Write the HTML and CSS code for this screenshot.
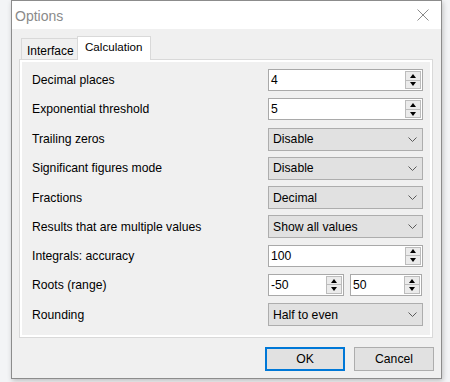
FILE: index.html
```html
<!DOCTYPE html>
<html>
<head>
<meta charset="utf-8">
<link rel="stylesheet" href="styles.css">
</head>
<body>
<div class="dialog">
  <div class="titlebar">
    <span class="title">Options</span>
    <svg class="close" width="12" height="12" viewBox="0 0 12 12"><path d="M0.5 0.5L11.5 11.5M11.5 0.5L0.5 11.5" stroke="#8a8a8a" stroke-width="1" fill="none"/></svg>
  </div>
  <div class="client">
    <div class="tabs">
      <div class="tab">Interface</div>
      <div class="tab active">Calculation</div>
    </div>
    <div class="panel">
      <div class="page">
        <div class="row"><span class="label">Decimal places</span>
          <div class="spin"><span class="val">4</span><div class="spinner"><div class="sb"><i class="up"></i></div><div class="sb"><i class="down"></i></div></div></div></div>
        <div class="row"><span class="label">Exponential threshold</span>
          <div class="spin"><span class="val">5</span><div class="spinner"><div class="sb"><i class="up"></i></div><div class="sb"><i class="down"></i></div></div></div></div>
        <div class="row"><span class="label">Trailing zeros</span>
          <div class="combo"><span class="val">Disable</span><svg class="chev" width="9" height="5" viewBox="0 0 9 5"><path d="M0.5 0.5L4.5 4.5L8.5 0.5" stroke="#5a5a5a" fill="none"/></svg></div></div>
        <div class="row"><span class="label">Significant figures mode</span>
          <div class="combo"><span class="val">Disable</span><svg class="chev" width="9" height="5" viewBox="0 0 9 5"><path d="M0.5 0.5L4.5 4.5L8.5 0.5" stroke="#5a5a5a" fill="none"/></svg></div></div>
        <div class="row"><span class="label">Fractions</span>
          <div class="combo"><span class="val">Decimal</span><svg class="chev" width="9" height="5" viewBox="0 0 9 5"><path d="M0.5 0.5L4.5 4.5L8.5 0.5" stroke="#5a5a5a" fill="none"/></svg></div></div>
        <div class="row"><span class="label">Results that are multiple values</span>
          <div class="combo"><span class="val">Show all values</span><svg class="chev" width="9" height="5" viewBox="0 0 9 5"><path d="M0.5 0.5L4.5 4.5L8.5 0.5" stroke="#5a5a5a" fill="none"/></svg></div></div>
        <div class="row"><span class="label">Integrals: accuracy</span>
          <div class="spin"><span class="val">100</span><div class="spinner"><div class="sb"><i class="up"></i></div><div class="sb"><i class="down"></i></div></div></div></div>
        <div class="row"><span class="label">Roots (range)</span>
          <div class="pair">
            <div class="spin small-a"><span class="val">-50</span><div class="spinner"><div class="sb"><i class="up"></i></div><div class="sb"><i class="down"></i></div></div></div>
            <div class="spin small-b"><span class="val">50</span><div class="spinner"><div class="sb"><i class="up"></i></div><div class="sb"><i class="down"></i></div></div></div>
          </div></div>
        <div class="row"><span class="label">Rounding</span>
          <div class="combo"><span class="val">Half to even</span><svg class="chev" width="9" height="5" viewBox="0 0 9 5"><path d="M0.5 0.5L4.5 4.5L8.5 0.5" stroke="#5a5a5a" fill="none"/></svg></div></div>
      </div>
    </div>
    <div class="buttons">
      <div class="btn default">OK</div>
      <div class="btn">Cancel</div>
    </div>
  </div>
</div>
</body>
</html>
```
FILE: styles.css
```css
* { box-sizing: border-box; }
html, body { margin: 0; padding: 0; }
body {
  background: #f3f4f6;
  width: 450px;
  height: 382px;
  overflow: hidden;
  padding-left: 11px;
  font-family: "Liberation Sans", Arial, sans-serif;
  font-size: 12.2px;
  color: #000;
}
.dialog {
  width: 431px;
  height: 379px;
  border: 1px solid #8c8c8c;
  background: #f0f0f0;
  box-shadow: 1px 2px 5px rgba(0,0,0,0.22);
  display: flex;
  flex-direction: column;
}
.titlebar {
  height: 28px;
  background: #fff;
  display: flex;
  align-items: center;
  justify-content: space-between;
  padding: 0 12px 0 3px;
}
.title {
  font-size: 14px;
  color: #8a8a8a;
  margin-top: 1px;
}
.close { margin-top: 0; }
.client {
  flex: 1;
  padding: 7px 8px 7px 7px;
  display: flex;
  flex-direction: column;
}
.tabs {
  height: 23px;
  display: flex;
  align-items: flex-end;
  padding-left: 2px;
}
.tab {
  height: 21px;
  border: 1px solid #d9d9d9;
  border-bottom: none;
  background: #f0f0f0;
  padding: 5px 0 0 5px;
  width: 57px;
  font-size: 12px;
  line-height: 14px;
}
.tab.active {
  height: 24px;
  width: 74px;
  margin-bottom: -1px;
  margin-left: -1px;
  background: #fff;
  padding: 3px 0 0 7px;
  position: relative;
  z-index: 1;
  font-size: 11.6px;
}
.panel {
  height: 279px;
  width: 414px;
  border: 1px solid #d9d9d9;
  background: #fff;
  padding: 2px;
}
.page {
  height: 100%;
  background: #f0f0f0;
  padding: 7px 7px 0 10px;
  display: flex;
  flex-direction: column;
  gap: 7.25px;
}
.row {
  height: 22px;
  display: grid;
  grid-template-columns: 1fr 155px;
  align-items: center;
}
.label { line-height: 14px; }
.spin {
  height: 22px;
  background: #fff;
  border: 1px solid #a9a9a9;
  display: flex;
  align-items: center;
  justify-content: space-between;
  padding: 1px 1px 1px 2px;
}
.val { line-height: 14px; }
.spinner {
  width: 16px;
  height: 18px;
  display: flex;
  flex-direction: column;
}
.sb {
  flex: 1;
  background: #ebebeb;
  border: 1px solid #bcbcbc;
  display: flex;
  align-items: center;
  justify-content: center;
}
.sb + .sb { border-top: none; }
.up, .down {
  width: 0; height: 0;
  border-left: 3.5px solid transparent;
  border-right: 3.5px solid transparent;
}
.up { border-bottom: 4px solid #000; }
.down { border-top: 4px solid #000; }
.pair {
  display: flex;
  gap: 6px;
}
.small-a { width: 76px; }
.small-b { width: 72px; }
.combo {
  height: 23px;
  background: #e1e1e1;
  border: 1px solid #adadad;
  display: flex;
  align-items: center;
  justify-content: space-between;
  padding: 0 5px 0 4px;
}
.buttons {
  margin-top: 9px;
  height: 24px;
  display: flex;
  justify-content: flex-end;
  gap: 9px;
  margin-right: -1px;
}
.btn {
  width: 80px;
  height: 24px;
  background: #e1e1e1;
  border: 1px solid #adadad;
  display: flex;
  align-items: center;
  justify-content: center;
  font-size: 12.2px;
}
.btn.default {
  border: 2px solid #0078d7;
}
```
